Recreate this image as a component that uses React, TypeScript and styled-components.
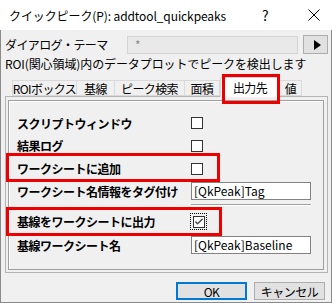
import styled, { createGlobalStyle } from "styled-components";

const GlobalStyle = createGlobalStyle`
    html, body {
        margin: 0;
        padding: 0;
        background: #ffffff;
    }
    * {
        box-sizing: border-box;
    }
`;

const tabs = [
    { label: "ROIボックス", width: 65 },
    { label: "基線", width: 38 },
    { label: "ピーク検索", width: 70 },
    { label: "面積", width: 35 },
    { label: "出力先", width: 60, active: true },
    { label: "値", width: 22 },
];

function CloseIcon() {
    return (
        <svg width="12" height="12" viewBox="0 0 12 12">
            <path d="M0.5 0.5 L11.5 11.5 M11.5 0.5 L0.5 11.5" stroke="#000" strokeWidth="1" fill="none" />
        </svg>
    );
}

function CheckBox({ checked, focused }: { checked?: boolean; focused?: boolean }) {
    const box = (
        <Box>
            {checked && (
                <svg width="11" height="11" viewBox="0 0 11 11">
                    <path d="M1.5 5.5 L4 8 L9.5 2.5" stroke="#4a4a4a" strokeWidth="1.6" fill="none" />
                </svg>
            )}
        </Box>
    );
    if (focused) return <FocusRect>{box}</FocusRect>;
    return box;
}

function App() {
    return (
        <>
            <GlobalStyle />
            <Window>
                <TitleBar>
                    <TitleText>クイックピーク(P): addtool_quickpeaks</TitleText>
                    <HelpMark>?</HelpMark>
                    <CloseBox><CloseIcon /></CloseBox>
                </TitleBar>
                <Body>
                    <ThemeRow>
                        <ThemeLabel>ダイアログ・テーマ</ThemeLabel>
                        <ThemeInput>*</ThemeInput>
                        <ArrowButton>
                            <svg width="8" height="10" viewBox="0 0 8 10">
                                <path d="M1 0 L8 5 L1 10 Z" fill="#000" />
                            </svg>
                        </ArrowButton>
                    </ThemeRow>
                    <Description>ROI(関心領域)内のデータプロットでピークを検出します</Description>
                    <TabStrip>
                        {tabs.map((t) => (
                            <Tab key={t.label} $w={t.width} $active={!!t.active}>{t.label}</Tab>
                        ))}
                    </TabStrip>
                    <Panel>
                        <Inner>
                            <Row $h={22}>
                                <Label>スクリプトウィンドウ</Label>
                                <CheckBox />
                            </Row>
                            <Row $h={23}>
                                <Label>結果ログ</Label>
                                <CheckBox />
                            </Row>
                            <Row $h={23} $mark="first">
                                <Label>ワークシートに追加</Label>
                                <CheckBox />
                            </Row>
                            <Row $h={22}>
                                <Label>ワークシート名情報をタグ付け</Label>
                                <TextField>[QkPeak]Tag</TextField>
                            </Row>
                            <Row $h={6}>
                                <span />
                                <Separator />
                            </Row>
                            <Row $h={27} $mark="second">
                                <Label>基線をワークシートに出力</Label>
                                <CheckBox checked focused />
                            </Row>
                            <Row $h={20}>
                                <Label>基線ワークシート名</Label>
                                <TextField>[QkPeak]Baseline</TextField>
                            </Row>
                        </Inner>
                    </Panel>
                    <Footer>
                        <DialogButton $primary>OK</DialogButton>
                        <DialogButton>キャンセル</DialogButton>
                    </Footer>
                </Body>
            </Window>
        </>
    );
}

const Window = styled.div`
    width: 332px;
    height: 303px;
    display: flex;
    flex-direction: column;
    font-family: "Noto Sans CJK JP", "Noto Sans", sans-serif;
    font-size: 12px;
    color: #000;
`;

const TitleBar = styled.div`
    height: 30px;
    background: #ffffff;
    display: flex;
    align-items: center;
    padding-left: 9px;
`;

const TitleText = styled.div`
    font-size: 12px;
    letter-spacing: -0.1px;
    flex: 1;
`;

const HelpMark = styled.div`
    width: 12px;
    font-size: 14px;
    margin-right: 34px;
`;

const CloseBox = styled.div`
    width: 12px;
    height: 12px;
    margin-right: 12px;
    display: flex;
`;

const Body = styled.div`
    flex: 1;
    background: #f0f0f0;
    border: 1px solid #8a8a8a;
    border-top: none;
    padding: 5px 2px 0 4px;
    display: flex;
    flex-direction: column;
`;

const ThemeRow = styled.div`
    display: flex;
    height: 19px;
    align-items: center;
`;

const ThemeLabel = styled.span`
    width: 122px;
    letter-spacing: -0.6px;
    white-space: nowrap;
`;

const ThemeInput = styled.div`
    width: 171px;
    height: 18px;
    background: #e9e9e9;
    border: 1px solid #d4d4d4;
    color: #8a8a8a;
    padding-left: 7px;
    line-height: 16px;
`;

const ArrowButton = styled.div`
    width: 25px;
    height: 19px;
    margin-left: 5px;
    background: #e1e1e1;
    border: 1px solid #adadad;
    display: flex;
    align-items: center;
    justify-content: center;
    padding-left: 2px;
`;

const Description = styled.div`
    height: 20px;
    line-height: 20px;
    letter-spacing: -0.1px;
    white-space: nowrap;
`;

const TabStrip = styled.div`
    display: flex;
    align-items: flex-end;
    height: 22px;
    padding-left: 7px;
    position: relative;
    z-index: 1;
`;

const Tab = styled.div<{ $w: number; $active: boolean }>`
    position: relative;
    width: ${(p) => p.$w}px;
    height: ${(p) => (p.$active ? 20 : 16)}px;
    margin-bottom: ${(p) => (p.$active ? -1 : 0)}px;
    background: ${(p) => (p.$active ? "#ffffff" : "#f0f0f0")};
    border: 1px solid #d9d9d9;
    border-bottom: ${(p) => (p.$active ? "none" : "1px solid #d9d9d9")};
    border-left: ${(p) => (p.$active ? "1px solid #d9d9d9" : "none")};
    display: flex;
    align-items: center;
    justify-content: center;
    letter-spacing: -0.6px;
    white-space: nowrap;
    &:first-child {
        border-left: 1px solid #d9d9d9;
    }
    ${(p) =>
        p.$active &&
        `
        &::after {
            content: "";
            position: absolute;
            top: -4px;
            left: 1px;
            right: -1px;
            bottom: -7px;
            border: 3px solid #ee0000;
        }
    `}
`;

const Panel = styled.div`
    height: 177px;
    margin-right: 1px;
    border: 1px solid #b4b4b4;
    padding: 3px 3px 2px 2px;
    background: #f0f0f0;
`;

const Inner = styled.div`
    height: 100%;
    border: 1px solid #a0a0a0;
    box-shadow: inset 1px 1px 0 #ffffff;
    padding-top: 11px;
    display: flex;
    flex-direction: column;
`;

const Row = styled.div<{ $h: number; $mark?: "first" | "second" }>`
    position: relative;
    height: ${(p) => p.$h}px;
    display: grid;
    grid-template-columns: 174px 120px;
    align-items: center;
    padding-left: 8px;
    ${(p) =>
        p.$mark === "first" &&
        `
        &::after {
            content: "";
            position: absolute;
            left: -3px;
            top: -4px;
            width: 208px;
            bottom: -2px;
            border: 3px solid #ee0000;
        }
    `}
    ${(p) =>
        p.$mark === "second" &&
        `
        &::after {
            content: "";
            position: absolute;
            left: -3px;
            top: -1px;
            width: 210px;
            bottom: -1px;
            border: 3px solid #ee0000;
        }
    `}
`;

const Label = styled.span`
    font-weight: bold;
    letter-spacing: -0.5px;
    white-space: nowrap;
`;

const Box = styled.div`
    width: 12px;
    height: 12px;
    background: #ffffff;
    border: 1px solid #333333;
    display: flex;
    align-items: center;
    justify-content: center;
`;

const FocusRect = styled.div`
    width: 17px;
    height: 17px;
    margin-left: -1px;
    border: 1px dotted #000;
    display: flex;
    align-items: center;
    justify-content: center;
`;

const TextField = styled.div`
    height: 18px;
    background: #ffffff;
    border: 1px solid #828282;
    padding-left: 2px;
    line-height: 16px;
    white-space: nowrap;
`;

const Separator = styled.div`
    height: 2px;
    border-top: 1px solid #a0a0a0;
    border-bottom: 1px solid #ffffff;
`;

const Footer = styled.div`
    display: flex;
    justify-content: flex-end;
    gap: 7px;
    margin-top: 9px;
    padding-right: 4px;
`;

const DialogButton = styled.div<{ $primary?: boolean }>`
    width: 71px;
    height: 18px;
    background: #e1e1e1;
    border: ${(p) => (p.$primary ? "2px solid #0078d7" : "1px solid #adadad")};
    display: flex;
    align-items: center;
    justify-content: center;
    letter-spacing: -0.5px;
`;

export default App;
